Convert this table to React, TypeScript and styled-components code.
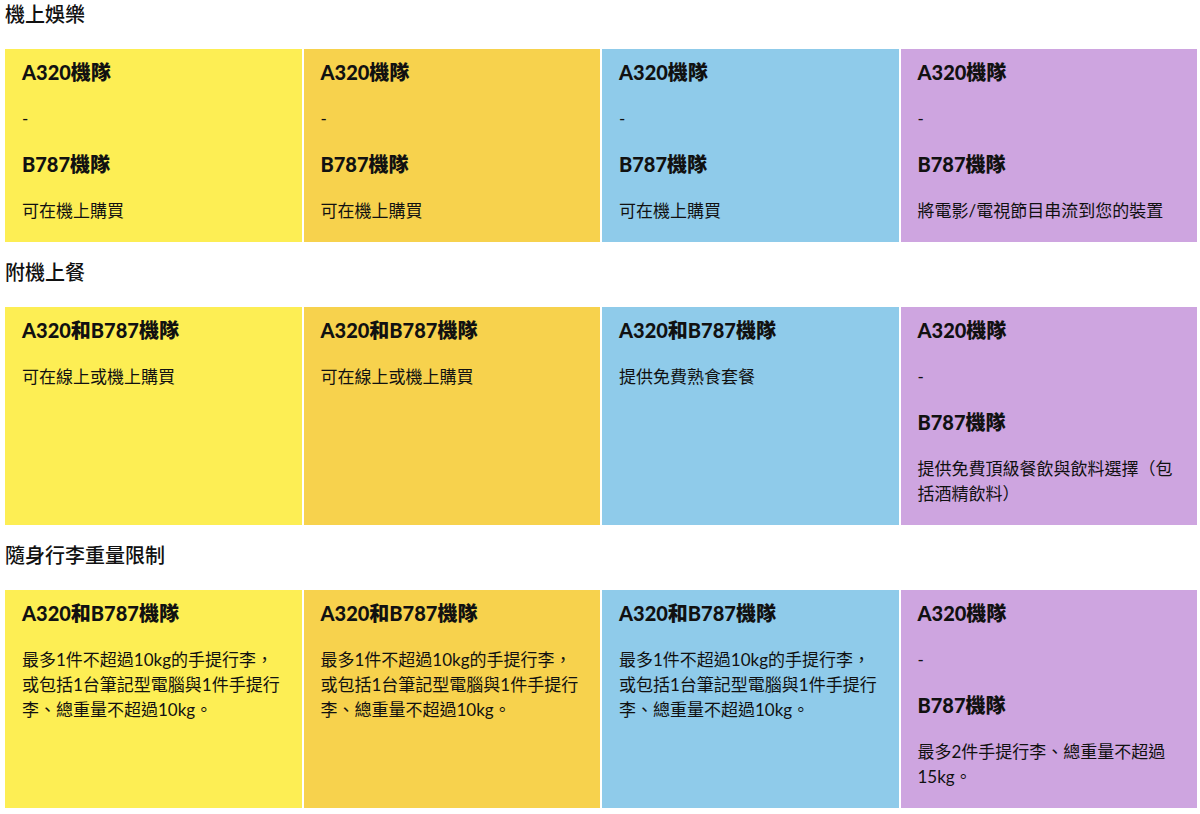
import styled, { createGlobalStyle } from "styled-components";

const GlobalStyle = createGlobalStyle`
  * {
    box-sizing: border-box;
  }

  body {
    margin: 0;
    background: #fff;
    color: #111;
    font-family: "Lato", "Noto Sans CJK TC", sans-serif;
  }
`;

const tones = {
  yellow: "#fdee54",
  orange: "#f7d24d",
  blue: "#8fcbea",
  purple: "#cea5e0",
};

type Tone = keyof typeof tones;

const Page = styled.div`
  padding: 0 3px 0 5px;
  display: flex;
  flex-direction: column;
  gap: 16px;
`;

const Section = styled.section`
  display: flex;
  flex-direction: column;
  gap: 21px;
`;

const Heading = styled.h2`
  margin: 0;
  font-size: 20px;
  line-height: 28px;
  font-weight: 500;
`;

const Grid = styled.div`
  display: grid;
  grid-template-columns: repeat(4, 1fr);
  gap: 2px;
`;

const Cell = styled.div<{ $tone: Tone }>`
  background: ${(p) => tones[p.$tone]};
  padding: 12px 17px 19px;
  display: flex;
  flex-direction: column;
  gap: 22px;
`;

const Fleet = styled.h3`
  margin: 0;
  font-size: 20px;
  line-height: 23px;
  font-weight: 900;
`;

const Note = styled.p`
  margin: 0;
  font-size: 17px;
  line-height: 25px;
  font-weight: 400;
`;

type Block = { fleet: string; text: string };
type Column = { tone: Tone; blocks: Block[] };
type Row = { title: string; columns: Column[] };

const tonesOrder: Tone[] = ["yellow", "orange", "blue", "purple"];

const same = (blocks: Block[][]): Column[] =>
  blocks.map((b, i) => ({ tone: tonesOrder[i], blocks: b }));

const rows: Row[] = [
  {
    title: "機上娛樂",
    columns: same([
      [
        { fleet: "A320機隊", text: "-" },
        { fleet: "B787機隊", text: "可在機上購買" },
      ],
      [
        { fleet: "A320機隊", text: "-" },
        { fleet: "B787機隊", text: "可在機上購買" },
      ],
      [
        { fleet: "A320機隊", text: "-" },
        { fleet: "B787機隊", text: "可在機上購買" },
      ],
      [
        { fleet: "A320機隊", text: "-" },
        { fleet: "B787機隊", text: "將電影/電視節目串流到您的裝置" },
      ],
    ]),
  },
  {
    title: "附機上餐",
    columns: same([
      [{ fleet: "A320和B787機隊", text: "可在線上或機上購買" }],
      [{ fleet: "A320和B787機隊", text: "可在線上或機上購買" }],
      [{ fleet: "A320和B787機隊", text: "提供免費熟食套餐" }],
      [
        { fleet: "A320機隊", text: "-" },
        { fleet: "B787機隊", text: "提供免費頂級餐飲與飲料選擇（包括酒精飲料）" },
      ],
    ]),
  },
  {
    title: "隨身行李重量限制",
    columns: same([
      [
        {
          fleet: "A320和B787機隊",
          text: "最多1件不超過10kg的手提行李，或包括1台筆記型電腦與1件手提行李、總重量不超過10kg。",
        },
      ],
      [
        {
          fleet: "A320和B787機隊",
          text: "最多1件不超過10kg的手提行李，或包括1台筆記型電腦與1件手提行李、總重量不超過10kg。",
        },
      ],
      [
        {
          fleet: "A320和B787機隊",
          text: "最多1件不超過10kg的手提行李，或包括1台筆記型電腦與1件手提行李、總重量不超過10kg。",
        },
      ],
      [
        { fleet: "A320機隊", text: "-" },
        { fleet: "B787機隊", text: "最多2件手提行李、總重量不超過15kg。" },
      ],
    ]),
  },
];

function App() {
  return (
    <>
      <GlobalStyle />
      <Page>
        {rows.map((row) => (
          <Section key={row.title}>
            <Heading>{row.title}</Heading>
            <Grid>
              {row.columns.map((col, i) => (
                <Cell key={i} $tone={col.tone}>
                  {col.blocks.map((b, j) => [
                    <Fleet key={`f${j}`}>{b.fleet}</Fleet>,
                    <Note key={`n${j}`}>{b.text}</Note>,
                  ])}
                </Cell>
              ))}
            </Grid>
          </Section>
        ))}
      </Page>
    </>
  );
}

export default App;
